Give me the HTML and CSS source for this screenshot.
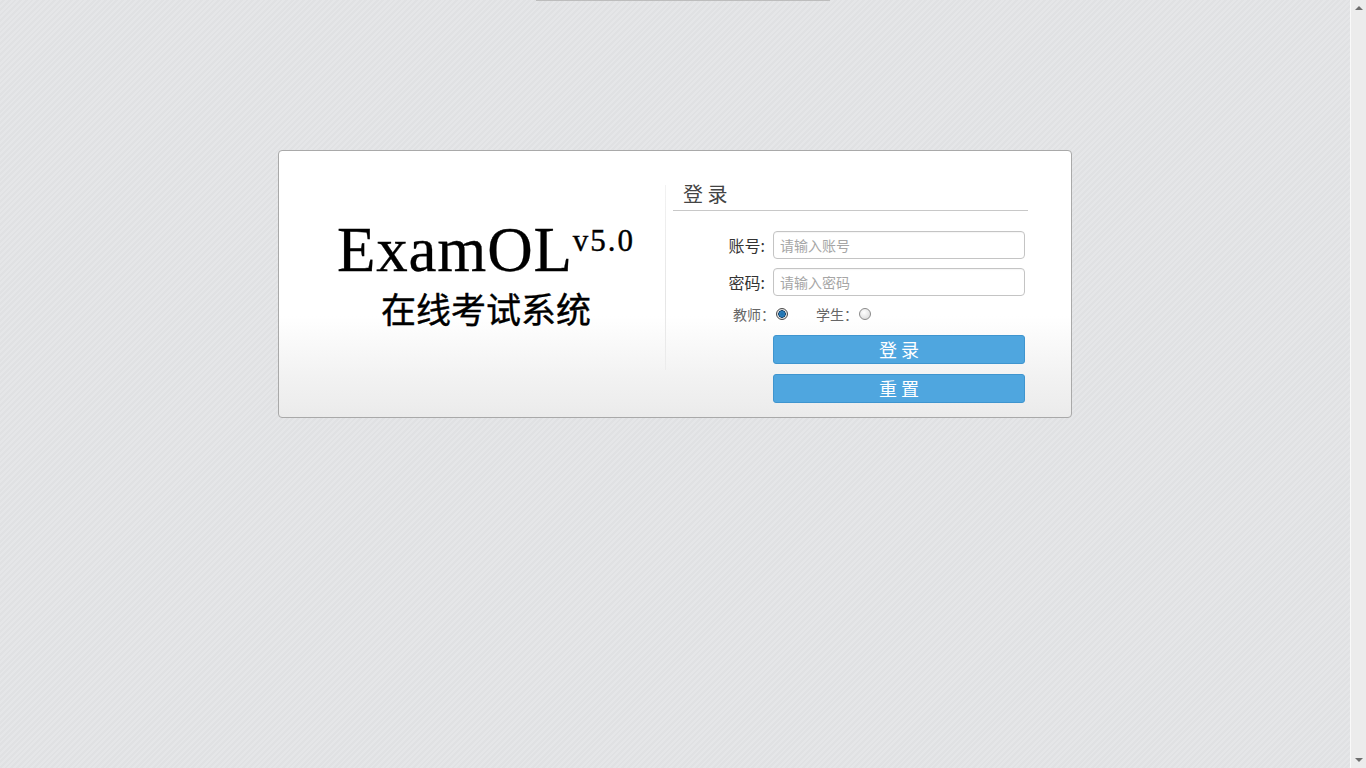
FILE: index.html
```html
<!DOCTYPE html>
<html lang="zh-CN">
<head>
<meta charset="utf-8">
<title>ExamOL 在线考试系统</title>
<link rel="stylesheet" href="styles.css">
</head>
<body>
<div class="page">
  <div class="viewport">
    <div class="topline"></div>
    <div class="card">
      <div class="brand">
        <div class="logo"><span class="name">ExamOL</span><span class="ver">v5.0</span></div>
        <div class="subtitle">在线考试系统</div>
      </div>
      <div class="divider"></div>
      <form class="login">
        <h2 class="login-title">登 录</h2>
        <div class="field">
          <label class="field-label">账号:</label>
          <input class="field-input" type="text" placeholder="请输入账号">
        </div>
        <div class="field">
          <label class="field-label">密码:</label>
          <input class="field-input" type="password" placeholder="请输入密码">
        </div>
        <div class="roles">
          <label class="role">教师：<input class="radio" type="radio" name="role" checked></label>
          <label class="role">学生：<input class="radio" type="radio" name="role"></label>
        </div>
        <button class="btn" type="button">登 录</button>
        <button class="btn" type="button">重 置</button>
      </form>
    </div>
  </div>
  <div class="scrollbar">
    <span class="arrow arrow-up"></span>
    <span class="arrow arrow-down"></span>
  </div>
</div>
</body>
</html>
```

FILE: styles.css
```css
html, body {
  margin: 0;
  padding: 0;
  height: 100%;
  overflow: hidden;
}

body {
  font-family: "Noto Sans CJK SC", "Liberation Sans", sans-serif;
  color: #333;
}

.page {
  display: flex;
  height: 768px;
}

.viewport {
  flex: 1;
  background-color: #e3e4e6;
  background-image: repeating-linear-gradient(135deg, #e5e6e8 0, #e5e6e8 2px, #e0e1e3 2px, #e0e1e3 4px);
}

.topline {
  width: 294px;
  height: 1px;
  margin-left: 536px;
  background: #bdbdbd;
}

.card {
  display: flex;
  width: 792px;
  height: 266px;
  margin: 149px auto 0;
  border: 1px solid #a9a9a9;
  border-radius: 4px;
  background: linear-gradient(to bottom, #ffffff 0%, #ffffff 62%, #f2f2f2 85%, #ebebeb 100%);
}

.brand {
  width: 386px;
  box-sizing: border-box;
  padding: 68px 0 0 28px;
  text-align: center;
  color: #000;
}

.logo {
  height: 63px;
  line-height: 63px;
  white-space: nowrap;
  font-family: "Liberation Serif", "DejaVu Serif", serif;
}

.name {
  font-size: 63px;
  letter-spacing: 0.8px;
  -webkit-text-stroke: 0.3px #000;
}

.ver {
  font-size: 31px;
  line-height: 30px;
  letter-spacing: 2px;
  vertical-align: 20px;
  -webkit-text-stroke: 0.4px #000;
}

.subtitle {
  margin-top: 8px;
  font-size: 35px;
  line-height: 35px;
  font-weight: 400;
  -webkit-text-stroke: 0.4px #000;
}

.divider {
  width: 1px;
  height: 185px;
  margin-top: 34px;
  background: linear-gradient(to bottom, #f2f2f2, #e6e6e6 60%, #ececec);
}

.login {
  width: 355px;
  margin: 0 0 0 7px;
  padding: 31px 0 0;
}

.login-title {
  margin: 0 0 20px;
  padding: 0 0 4px 10px;
  font-size: 20px;
  line-height: 24px;
  font-weight: normal;
  color: #444;
  border-bottom: 1px solid #c8c8c8;
}

.field {
  display: flex;
  align-items: center;
  margin-bottom: 9px;
}

.field-label {
  width: 92px;
  padding-right: 8px;
  text-align: right;
  font-size: 16px;
  color: #333;
}

.field-input {
  width: 252px;
  height: 28px;
  box-sizing: border-box;
  padding: 0 6px;
  border: 1px solid #c4c4c4;
  border-radius: 4px;
  font-family: inherit;
  font-size: 14px;
  color: #333;
  background: #fff;
  box-shadow: inset 0 1px 1px rgba(0, 0, 0, 0.04);
  outline: none;
}

.field-input::placeholder {
  color: #a6a6a6;
}

.roles {
  display: flex;
  align-items: center;
  gap: 28px;
  height: 22px;
  margin: -2px 0 10px 60px;
  font-size: 14px;
  color: #666;
}

.role {
  display: flex;
  align-items: center;
}

.radio {
  appearance: none;
  -webkit-appearance: none;
  width: 12px;
  height: 12px;
  margin: 0 0 0 1px;
  box-sizing: border-box;
  border: 1px solid #8a8a8a;
  border-radius: 50%;
  background: radial-gradient(circle at 40% 35%, #ffffff, #d4d4d4);
}

.radio:checked {
  border-color: #4a4a4a;
  background: radial-gradient(circle at 50% 50%, #1f6fa8 0, #2a7fbf 2.5px, #0e3e66 3.5px, #e8e8e8 4px, #c8c8c8 100%);
}

.btn {
  display: block;
  width: 252px;
  height: 29px;
  margin: 0 0 10px 100px;
  padding: 0;
  border: 1px solid #3f95cf;
  border-radius: 3px;
  background: #4fa6df;
  color: #fff;
  font-family: inherit;
  font-size: 18px;
  line-height: 27px;
  cursor: pointer;
}

.scrollbar {
  width: 16px;
  flex: none;
  border-left: 1px solid #f9f9f9;
  background: #ececec;
  display: flex;
  flex-direction: column;
  justify-content: space-between;
  align-items: center;
  padding: 6px 0 6px;
  box-sizing: border-box;
}

.arrow {
  width: 0;
  height: 0;
  border-left: 4px solid transparent;
  border-right: 4px solid transparent;
}

.arrow-up {
  border-bottom: 4px solid #6e6e6e;
}

.arrow-down {
  border-top: 4px solid #6e6e6e;
}
```
